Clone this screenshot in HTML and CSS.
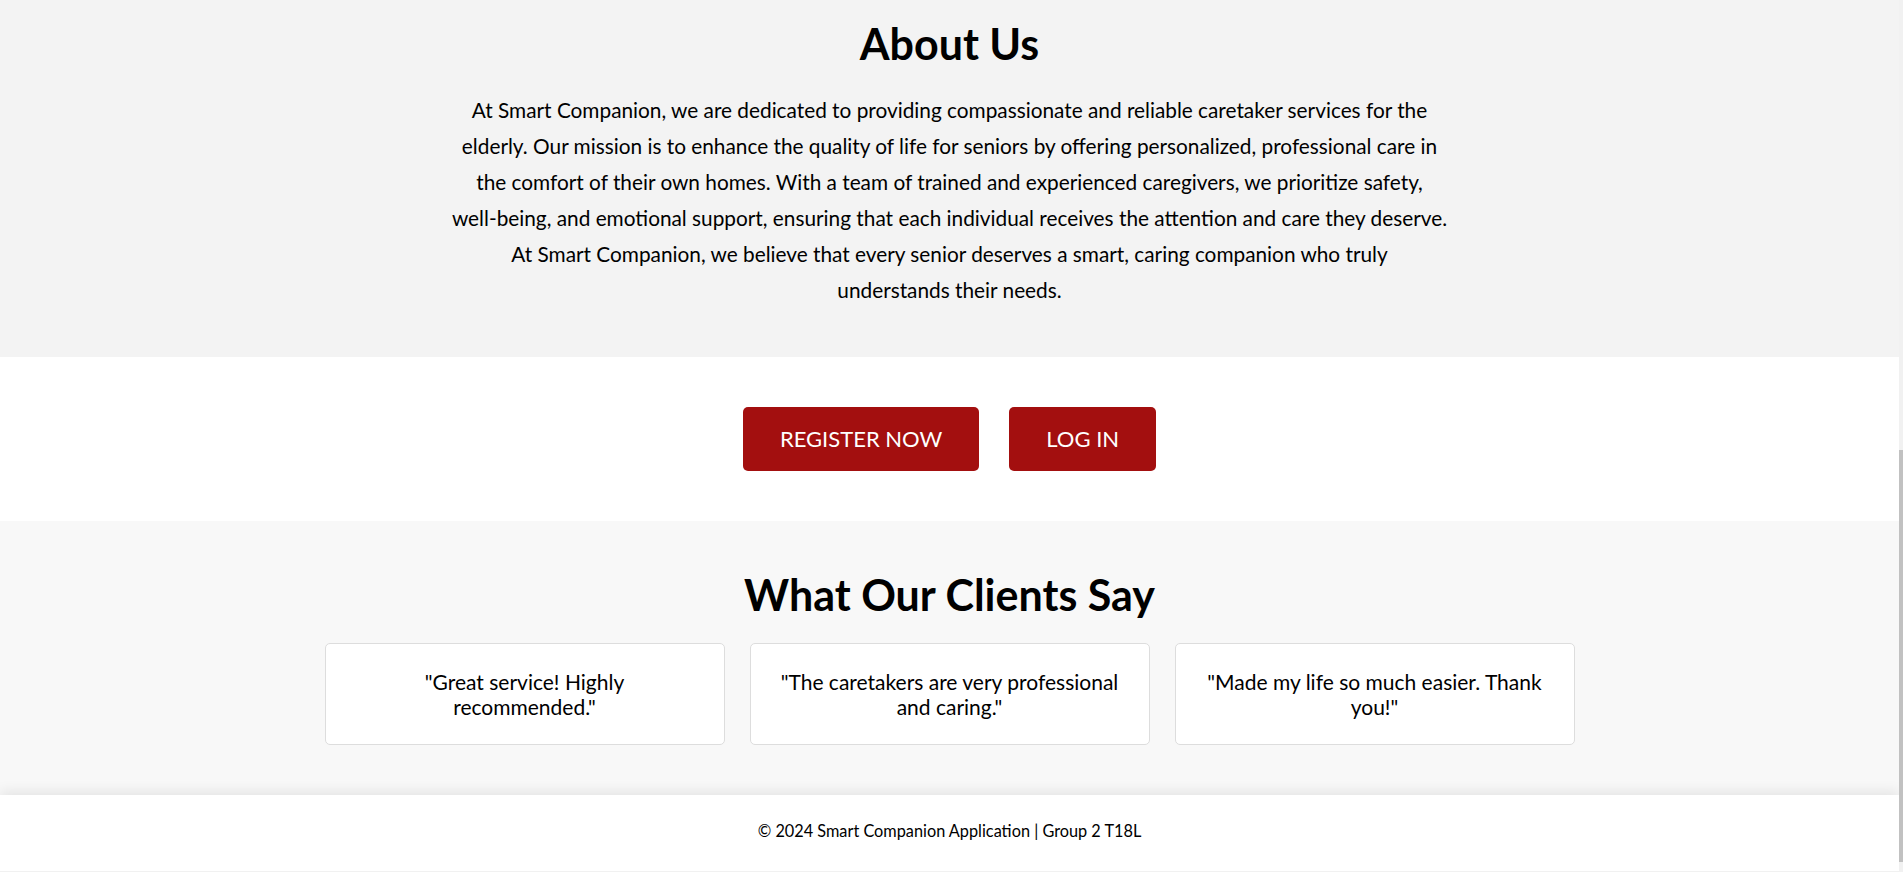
FILE: index.html
```html
<!DOCTYPE html>
<html lang="en">
<head>
<meta charset="utf-8">
<title>Smart Companion</title>
<link rel="stylesheet" href="styles.css">
</head>
<body>
<section class="about">
  <h2 class="title">About Us</h2>
  <p class="about-text">At Smart Companion, we are dedicated to providing compassionate and reliable caretaker services for the<br>
elderly. Our mission is to enhance the quality of life for seniors by offering personalized, professional care in<br>
the comfort of their own homes. With a team of trained and experienced caregivers, we prioritize safety,<br>
well-being, and emotional support, ensuring that each individual receives the attention and care they deserve.<br>
At Smart Companion, we believe that every senior deserves a smart, caring companion who truly<br>
understands their needs.</p>
</section>
<section class="actions">
  <a class="btn" href="#">REGISTER NOW</a>
  <a class="btn" href="#">LOG IN</a>
</section>
<section class="testimonials">
  <h2 class="title">What Our Clients Say</h2>
  <div class="cards">
    <div class="card">"Great service! Highly<br>recommended."</div>
    <div class="card">"The caretakers are very professional<br>and caring."</div>
    <div class="card">"Made my life so much easier. Thank<br>you!"</div>
  </div>
</section>
<footer class="footer">© 2024 Smart Companion Application | Group 2 T18L</footer>
</body>
</html>
```

FILE: styles.css
```css
html {
  margin: 0;
  padding: 0;
  background: linear-gradient(to bottom, #f1f1f1 450px, #c1c1c1 450px, #c1c1c1 862px, #f1f1f1 862px);
}
body {
  margin: 0 4px 0 0;
  padding: 0;
  font-family: Lato, "Open Sans", sans-serif;
  color: #000;
  background: #fdfdfd;
}
.title {
  margin: 0;
  font-size: 43px;
  line-height: 48px;
  font-weight: 700;
  text-align: center;
}
.about {
  background: #f3f3f3;
  padding: 20px 20px 49px;
}
.about .title {
  margin-bottom: 24px;
}
.about-text {
  margin: 0 auto;
  text-align: center;
  font-size: 20.8px;
  line-height: 36px;
  white-space: nowrap;
}
.actions {
  background: #fff;
  display: flex;
  justify-content: center;
  gap: 30px;
  padding: 50px 0;
}
.btn {
  display: block;
  background: #a30f0f;
  color: #fff;
  text-decoration: none;
  font-size: 22px;
  line-height: 24px;
  padding: 20px 37px;
  border-radius: 5px;
}
.testimonials {
  background: #f8f8f8;
  padding: 50px 0 50px;
}
.testimonials .title {
  margin-bottom: 24px;
}
.cards {
  display: flex;
  justify-content: center;
  gap: 25px;
}
.card {
  box-sizing: border-box;
  width: 400px;
  background: #fff;
  border: 1px solid #ddd;
  border-radius: 5px;
  padding: 25px 20px;
  text-align: center;
  font-size: 21px;
  line-height: 25px;
}
.footer {
  position: relative;
  background: #fff;
  text-align: center;
  font-size: 16.3px;
  line-height: 20px;
  padding: 26px 0 30px;
  box-shadow: 0 -4px 12px rgba(0, 0, 0, 0.08);
}
```
